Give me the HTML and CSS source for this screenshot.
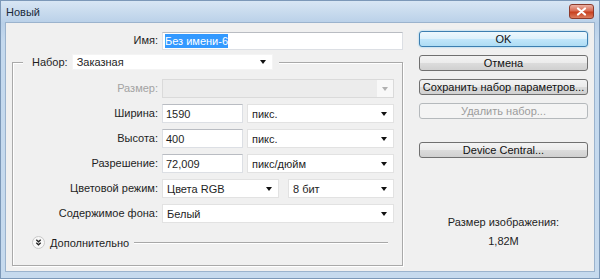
FILE: index.html
```html
<!DOCTYPE html>
<html>
<head>
	<title>Новый</title>
	<meta charset="utf-8">
	<link rel="stylesheet" href="styles.css">
</head>
<body>
	<div class="window">
		<div class="titlebar">
			<span class="title">Новый</span>
			<span class="close">
				<svg width="11" height="9" viewBox="0 0 11 9"><path d="M2 1.5 L9 7.5 M9 1.5 L2 7.5" stroke="#fff" stroke-width="2.2" stroke-linecap="round"/></svg>
			</span>
		</div>

		<div class="content">
			<div class="form">
				<div class="name-row">
					<label class="lbl">Имя:</label>
					<div class="input name"><span class="sel">Без имени-6</span></div>
				</div>

				<fieldset class="group">
					<legend>
						<div class="legend-inner">
							<label>Набор:</label>
							<div class="select preset"><span>Заказная</span><i class="arrow"></i></div>
						</div>
					</legend>

					<div class="rows">
						<label class="lbl off">Размер:</label>
						<div class="select disabled"><span></span><span class="arrow-box"><i class="arrow grey"></i></span></div>

						<label class="lbl">Ширина:</label>
						<div class="pair">
							<div class="input num">1590</div>
							<div class="select unit"><span>пикс.</span><i class="arrow"></i></div>
						</div>

						<label class="lbl">Высота:</label>
						<div class="pair">
							<div class="input num">400</div>
							<div class="select unit"><span>пикс.</span><i class="arrow"></i></div>
						</div>

						<label class="lbl">Разрешение:</label>
						<div class="pair">
							<div class="input num">72,009</div>
							<div class="select unit"><span>пикс/дюйм</span><i class="arrow"></i></div>
						</div>

						<label class="lbl">Цветовой режим:</label>
						<div class="pair wide-gap">
							<div class="select mode"><span>Цвета RGB</span><i class="arrow"></i></div>
							<div class="select bits"><span>8 бит</span><i class="arrow"></i></div>
						</div>

						<label class="lbl">Содержимое фона:</label>
						<div class="select"><span>Белый</span><i class="arrow"></i></div>
					</div>

					<div class="more">
						<span class="more-icon">
							<svg width="13" height="13" viewBox="0 0 13 13">
								<circle cx="6.5" cy="6.5" r="6" fill="#f7f7f7" stroke="#c8c8c8"/>
								<path d="M4.3 3.8 L6.5 5.8 L8.7 3.8 M4.3 6.8 L6.5 8.8 L8.7 6.8" fill="none" stroke="#222" stroke-width="1.3"/>
							</svg>
						</span>
						<span>Дополнительно</span>
						<span class="more-line"></span>
					</div>
				</fieldset>
			</div>

			<div class="side">
				<div class="buttons">
					<button class="btn default">OK</button>
					<button class="btn">Отмена</button>
					<button class="btn">Сохранить набор параметров...</button>
					<button class="btn" disabled>Удалить набор...</button>
					<button class="btn device">Device Central...</button>
				</div>
				<div class="size-info">
					<div>Размер изображения:</div>
					<div class="size-val">1,82M</div>
				</div>
			</div>
		</div>
	</div>
</body>
</html>
```

FILE: styles.css
```css
*,*::after,*::before{
	box-sizing: border-box;
}

body{
	margin: 0;
	font-family: "Liberation Sans", Arial, sans-serif;
	font-size: 11px;
	color: #1e1e1e;
}

.window{
	width: 600px;
	height: 279px;
	border: 1px solid #7c98b8;
	background: linear-gradient(#d8e6f4, #b9d0e8 22px, #c4d9ee 40px, #c6daee);
	display: flex;
	flex-direction: column;
	padding: 0 4px 6px 4px;
}

.titlebar{
	height: 21px;
	display: flex;
	align-items: center;
	justify-content: space-between;
}

.title{
	padding-left: 1px;
	color: #1b2a3a;
}

.close{
	width: 25px;
	height: 15px;
	margin-right: 1px;
	border: 1px solid #8d3b2c;
	border-radius: 3px;
	background: linear-gradient(#eab0a3, #d86a52 45%, #c7401f 55%, #dc7d5f);
	display: flex;
	justify-content: center;
	align-items: center;
}

.content{
	flex: 1;
	background-color: #f0f0f0;
	border: 1px solid #9bb3cd;
	display: flex;
}

/* left part */
.form{
	width: 398px;
	padding: 8px 0 0 6px;
}

.name-row{
	display: flex;
	align-items: center;
	gap: 4px;
}

.name-row .lbl{
	width: 146px;
}

.lbl{
	text-align: right;
	line-height: 19px;
}

.lbl.off{
	color: #a3a3a3;
}

.input{
	height: 19px;
	background-color: white;
	border: 1px solid #dcdfe4;
	border-top-color: #b9bcc2;
	padding-left: 3px;
	display: flex;
	align-items: center;
}

.name{
	width: 241px;
	height: 18px;
	padding-left: 2px;
}

.sel{
	background-color: #3399ff;
	color: white;
	padding: 1px 0;
}

.group{
	margin: 4px 0 0 0;
	padding: 0 0 16px 0;
	width: 391px;
	min-width: 0;
	border: 1px solid #a9a9a9;
	box-shadow: inset 1px 1px 0 #fff, 1px 1px 0 #fff;
}

.group legend{
	margin-left: 10px;
	padding: 0 6px 0 9px;
	background-color: #f0f0f0;
}

.legend-inner{
	display: flex;
	align-items: center;
	gap: 4px;
}

.select{
	height: 19px;
	background-color: white;
	border: 1px solid #e2e2e2;
	display: flex;
	align-items: center;
	justify-content: space-between;
	padding: 0 6px 0 4px;
}

.preset{
	width: 201px;
	height: 16px;
	border-color: #f4f4f4;
}

.arrow{
	display: inline-block;
	width: 0;
	height: 0;
	border-left: 3.5px solid transparent;
	border-right: 3.5px solid transparent;
	border-top: 4px solid #111;
}

.arrow.grey{
	border-top-color: #b0b0b0;
}

.select.disabled{
	background-color: #ececec;
	border-color: #dadada;
	padding: 0;
}

.arrow-box{
	width: 16px;
	height: 17px;
	background-color: #f8f8f8;
	display: flex;
	justify-content: center;
	align-items: center;
}

.rows{
	display: grid;
	grid-template-columns: 145px 232px;
	column-gap: 4px;
	row-gap: 6px;
	margin-top: 9px;
}

.pair{
	display: flex;
	gap: 4px;
}

.pair.wide-gap{
	gap: 9px;
}

.num{
	width: 81px;
}

.unit{
	flex: 1;
}

.mode{
	width: 117px;
}

.bits{
	flex: 1;
}

.more{
	display: flex;
	align-items: center;
	height: 13px;
	margin: 13px 14px 0 19px;
}

.more-icon{
	display: flex;
	margin-right: 5px;
}

.more-line{
	flex: 1;
	margin-left: 5px;
	border-top: 1px solid #a8a8a8;
	border-bottom: 1px solid #fff;
}

/* right part */
.side{
	width: 169px;
	margin-left: 15px;
	padding-top: 8px;
	display: flex;
	flex-direction: column;
}

.buttons{
	display: flex;
	flex-direction: column;
	gap: 8px;
}

.btn{
	height: 16px;
	padding: 0;
	font-family: inherit;
	font-size: 11px;
	color: #111;
	border: 1px solid #707070;
	border-radius: 3px;
	background: linear-gradient(#f3f3f3, #ebebeb 50%, #dcdcdc 50%, #d0d0d0);
	line-height: 14px;
}

.btn.default{
	border-color: #3c7fb1;
	background: linear-gradient(#eef8fd, #dcf1fc 50%, #c2e7fb 50%, #aedcf4);
	box-shadow: 0 0 2px #7ac6ee;
}

.btn:disabled{
	border-color: #b5b9bc;
	background: #f4f4f4;
	color: #9c9c9c;
}

.btn.device{
	margin-top: 15px;
}

.size-info{
	margin-top: 58px;
	text-align: center;
	line-height: 13px;
}

.size-val{
	margin-top: 6px;
}
```
